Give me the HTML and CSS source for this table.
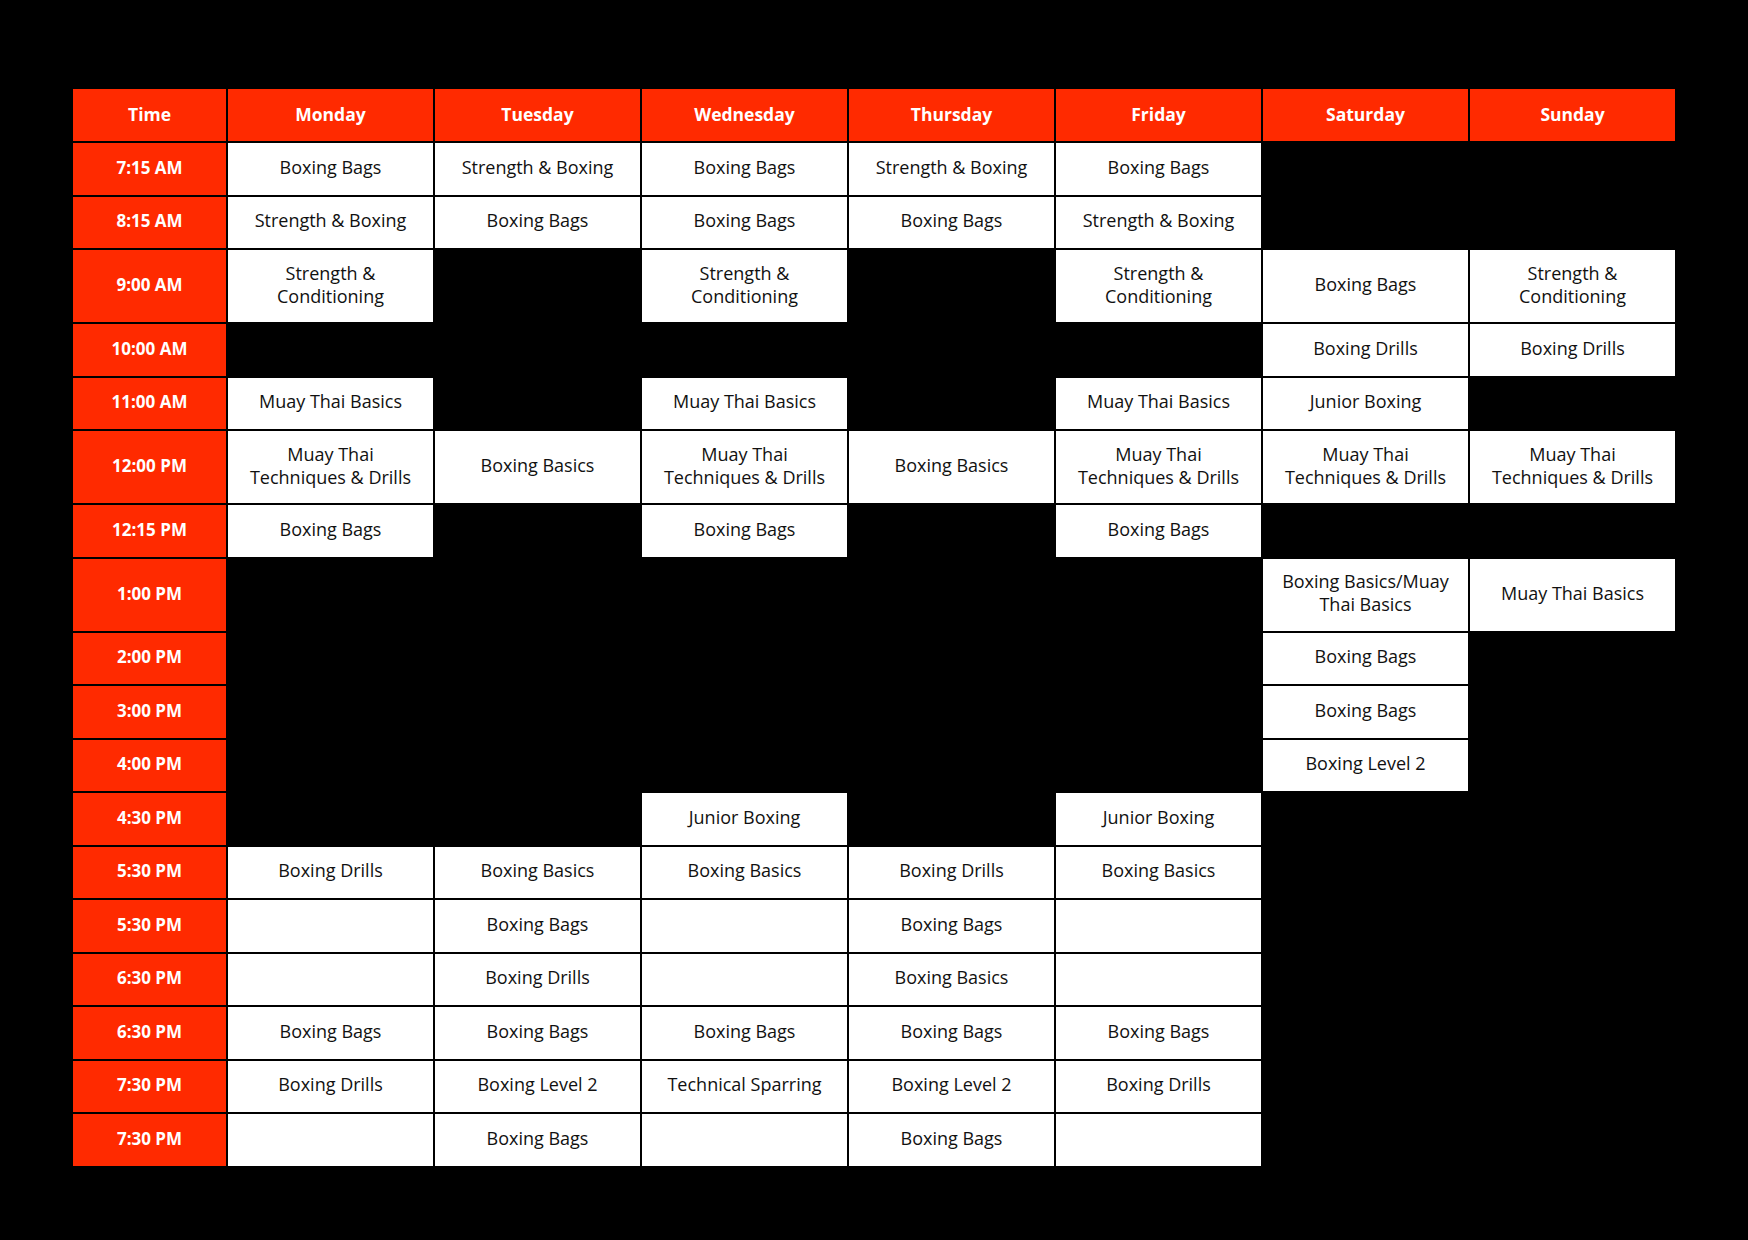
FILE: index.html
```html
<!DOCTYPE html>
<html lang="en">
<head>
<meta charset="utf-8">
<title>Class Schedule</title>
<link rel="stylesheet" href="styles.css">
</head>
<body>
<div class="schedule">
  <div class="h">Time</div><div class="h">Monday</div><div class="h">Tuesday</div><div class="h">Wednesday</div><div class="h">Thursday</div><div class="h">Friday</div><div class="h">Saturday</div><div class="h">Sunday</div>

  <div class="t">7:15 AM</div><div class="c">Boxing Bags</div><div class="c">Strength &amp; Boxing</div><div class="c">Boxing Bags</div><div class="c">Strength &amp; Boxing</div><div class="c">Boxing Bags</div><div class="x"></div><div class="x"></div>

  <div class="t">8:15 AM</div><div class="c">Strength &amp; Boxing</div><div class="c">Boxing Bags</div><div class="c">Boxing Bags</div><div class="c">Boxing Bags</div><div class="c">Strength &amp; Boxing</div><div class="x"></div><div class="x"></div>

  <div class="t">9:00 AM</div><div class="c">Strength &amp;<br>Conditioning</div><div class="x"></div><div class="c">Strength &amp;<br>Conditioning</div><div class="x"></div><div class="c">Strength &amp;<br>Conditioning</div><div class="c">Boxing Bags</div><div class="c">Strength &amp;<br>Conditioning</div>

  <div class="t">10:00 AM</div><div class="x"></div><div class="x"></div><div class="x"></div><div class="x"></div><div class="x"></div><div class="c">Boxing Drills</div><div class="c">Boxing Drills</div>

  <div class="t">11:00 AM</div><div class="c">Muay Thai Basics</div><div class="x"></div><div class="c">Muay Thai Basics</div><div class="x"></div><div class="c">Muay Thai Basics</div><div class="c">Junior Boxing</div><div class="x"></div>

  <div class="t">12:00 PM</div><div class="c">Muay Thai<br>Techniques &amp; Drills</div><div class="c">Boxing Basics</div><div class="c">Muay Thai<br>Techniques &amp; Drills</div><div class="c">Boxing Basics</div><div class="c">Muay Thai<br>Techniques &amp; Drills</div><div class="c">Muay Thai<br>Techniques &amp; Drills</div><div class="c">Muay Thai<br>Techniques &amp; Drills</div>

  <div class="t">12:15 PM</div><div class="c">Boxing Bags</div><div class="x"></div><div class="c">Boxing Bags</div><div class="x"></div><div class="c">Boxing Bags</div><div class="x"></div><div class="x"></div>

  <div class="t">1:00 PM</div><div class="x"></div><div class="x"></div><div class="x"></div><div class="x"></div><div class="x"></div><div class="c">Boxing Basics/Muay<br>Thai Basics</div><div class="c">Muay Thai Basics</div>

  <div class="t">2:00 PM</div><div class="x"></div><div class="x"></div><div class="x"></div><div class="x"></div><div class="x"></div><div class="c">Boxing Bags</div><div class="x"></div>

  <div class="t">3:00 PM</div><div class="x"></div><div class="x"></div><div class="x"></div><div class="x"></div><div class="x"></div><div class="c">Boxing Bags</div><div class="x"></div>

  <div class="t">4:00 PM</div><div class="x"></div><div class="x"></div><div class="x"></div><div class="x"></div><div class="x"></div><div class="c">Boxing Level 2</div><div class="x"></div>

  <div class="t">4:30 PM</div><div class="x"></div><div class="x"></div><div class="c">Junior Boxing</div><div class="x"></div><div class="c">Junior Boxing</div><div class="x"></div><div class="x"></div>

  <div class="t">5:30 PM</div><div class="c">Boxing Drills</div><div class="c">Boxing Basics</div><div class="c">Boxing Basics</div><div class="c">Boxing Drills</div><div class="c">Boxing Basics</div><div class="x"></div><div class="x"></div>

  <div class="t">5:30 PM</div><div class="c"></div><div class="c">Boxing Bags</div><div class="c"></div><div class="c">Boxing Bags</div><div class="c"></div><div class="x"></div><div class="x"></div>

  <div class="t">6:30 PM</div><div class="c"></div><div class="c">Boxing Drills</div><div class="c"></div><div class="c">Boxing Basics</div><div class="c"></div><div class="x"></div><div class="x"></div>

  <div class="t">6:30 PM</div><div class="c">Boxing Bags</div><div class="c">Boxing Bags</div><div class="c">Boxing Bags</div><div class="c">Boxing Bags</div><div class="c">Boxing Bags</div><div class="x"></div><div class="x"></div>

  <div class="t">7:30 PM</div><div class="c">Boxing Drills</div><div class="c">Boxing Level 2</div><div class="c">Technical Sparring</div><div class="c">Boxing Level 2</div><div class="c">Boxing Drills</div><div class="x"></div><div class="x"></div>

  <div class="t">7:30 PM</div><div class="c"></div><div class="c">Boxing Bags</div><div class="c"></div><div class="c">Boxing Bags</div><div class="c"></div><div class="x"></div><div class="x"></div>
</div>
</body>
</html>
```

FILE: styles.css
```css
html, body {
  margin: 0;
  padding: 0;
  background: #000;
}

body {
  width: 1748px;
  height: 1240px;
  padding: 89px 0 0 73px;
  box-sizing: border-box;
  font-family: "Open Sans", "Liberation Sans", sans-serif;
}

.schedule {
  display: grid;
  grid-template-columns: 153px repeat(7, 205px);
  grid-template-rows: 52px 51.5px 51.5px 72px 51.5px 51.5px 72px 51.5px 72px 51.5px 51.5px 51.5px 51.5px 51.5px 51.5px 51.5px 51.5px 51.5px 51.5px;
  gap: 2px;
  width: max-content;
}

.h, .t, .c {
  display: flex;
  align-items: center;
  justify-content: center;
  text-align: center;
  box-sizing: border-box;
  padding-bottom: 3px;
}

.h, .t {
  background: #ff2a00;
  color: #fff;
  font-weight: 700;
  font-size: 17px;
}

.h {
  font-size: 17.5px;
  padding-bottom: 2px;
}

.c {
  background: #fff;
  color: #111;
  font-size: 18px;
  line-height: 23px;
}

.x {
  background: transparent;
}
```
